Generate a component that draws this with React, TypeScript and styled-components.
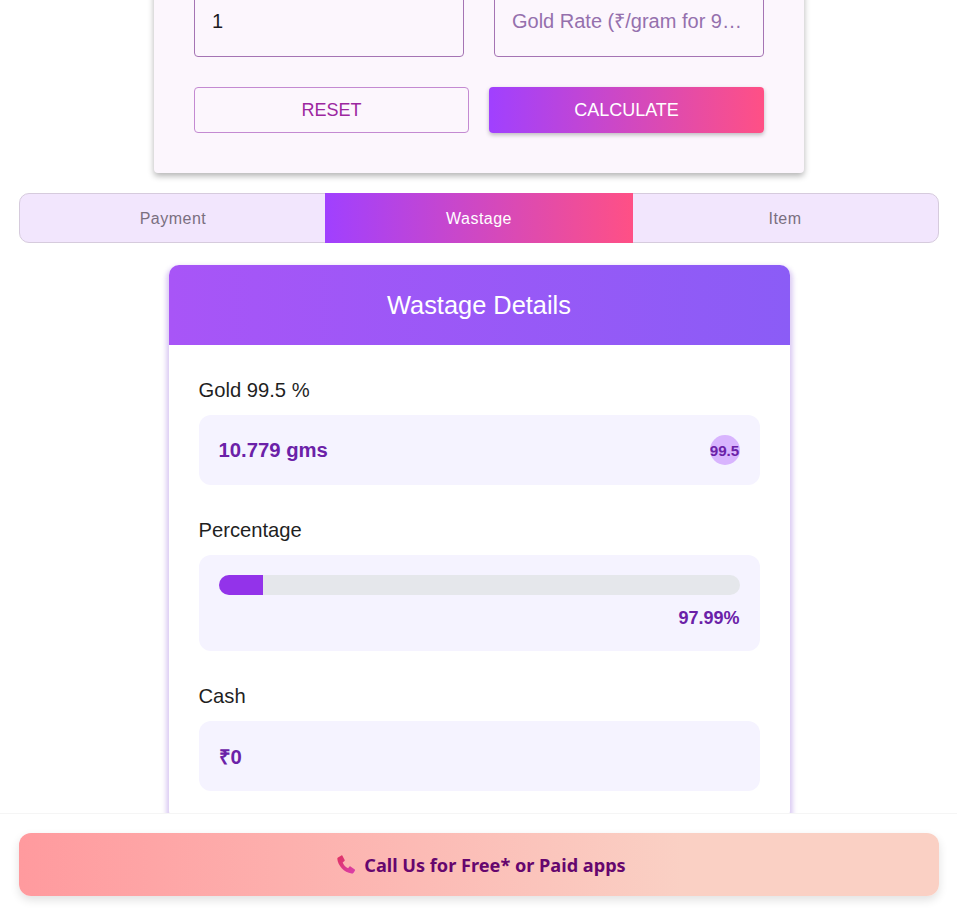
import React from 'react';
import styled, { createGlobalStyle } from 'styled-components';

const brand = 'linear-gradient(90deg, #a040ff, #ff5085)';

const GlobalStyle = createGlobalStyle`
  html, body {
    margin: 0;
    height: 100%;
    overflow: hidden;
    background: #fff;
    font-family: "Liberation Sans", Arial, sans-serif;
  }
  * { box-sizing: border-box; }
`;

const Page = styled.div`
  display: flex;
  flex-direction: column;
  align-items: center;
  margin-top: -55px;
  padding: 0 18px 0 19px;
`;

const FormCard = styled.div`
  width: 650px;
  padding: 40px;
  background: #fcf6fd;
  border-radius: 4px;
  box-shadow: 0 3px 6px rgba(0, 0, 0, 0.3);
  display: flex;
  flex-direction: column;
  gap: 30px;
`;

const InputRow = styled.div`
  display: flex;
  gap: 30px;
`;

const Field = styled.input`
  width: 270px;
  height: 72px;
  padding: 0 17px;
  background: transparent;
  border: 1px solid #a574b4;
  border-radius: 4px;
  font: 20px "Liberation Sans", Arial, sans-serif;
  color: #1c1b1f;
  text-overflow: ellipsis;
  outline: none;

  &::placeholder {
    color: #9570ad;
    opacity: 1;
  }
`;

const ButtonRow = styled.div`
  display: flex;
  gap: 20px;
`;

const ResetButton = styled.button`
  width: 275px;
  height: 46px;
  padding: 0;
  background: transparent;
  border: 1px solid #c48ad2;
  border-radius: 4px;
  font: 18px "Liberation Sans", Arial, sans-serif;
  color: #9c27a0;
`;

const CalcButton = styled.button`
  width: 275px;
  height: 46px;
  padding: 0;
  background: ${brand};
  border: 0;
  border-radius: 4px;
  box-shadow: 0 2px 4px rgba(0, 0, 0, 0.25);
  font: 18px "Liberation Sans", Arial, sans-serif;
  color: #fff;
`;

const Tabs = styled.div`
  align-self: stretch;
  display: grid;
  grid-template-columns: repeat(3, 1fr);
  height: 50px;
  margin-top: 20px;
  background: #f2e6fd;
  border: 1px solid #d6cbdd;
  border-radius: 10px;
`;

const Tab = styled.div<{ $active?: boolean }>`
  display: flex;
  align-items: center;
  justify-content: center;
  padding-top: 1px;
  font-size: 16px;
  letter-spacing: 0.5px;
  color: ${(p) => (p.$active ? '#fff' : '#7a6f80')};
  background: ${(p) => (p.$active ? brand : 'none')};
  margin: ${(p) => (p.$active ? '-1px' : '0')};
`;

const DetailCard = styled.div`
  width: 621px;
  margin-top: 22px;
  margin-bottom: 30px;
  background: #fff;
  border-radius: 10px;
  box-shadow: 0 4px 4px 3px rgba(120, 60, 210, 0.25);
  overflow: hidden;
`;

const DetailHeader = styled.div`
  height: 80px;
  padding-top: 1px;
  display: flex;
  align-items: center;
  justify-content: center;
  background: linear-gradient(90deg, #a855f7, #8b5cf6);
  color: #fff;
  font-size: 25.4px;
`;

const DetailBody = styled.div`
  padding: 30px;
  display: flex;
  flex-direction: column;
  gap: 30px;
`;

const Group = styled.div`
  display: flex;
  flex-direction: column;
  gap: 14px;
`;

const Label = styled.div`
  font-size: 20.2px;
  line-height: 30px;
  height: 26px;
  color: #1f1f1f;
`;

const ValueBox = styled.div`
  height: 70px;
  padding: 0 20px;
  display: flex;
  align-items: center;
  justify-content: space-between;
  background: #f5f3ff;
  border-radius: 12px;
`;

const Value = styled.span`
  font-size: 20.3px;
  font-weight: 700;
  color: #6b21a8;
`;

const Badge = styled.span`
  width: 30px;
  height: 30px;
  display: flex;
  align-items: center;
  justify-content: center;
  border-radius: 50%;
  background: #d8b4fe;
  font-size: 15.2px;
  font-weight: 700;
  color: #6b21a8;
`;

const ProgressBox = styled.div`
  height: 96px;
  padding: 20px;
  background: #f5f3ff;
  border-radius: 12px;
`;

const Track = styled.div`
  height: 20px;
  background: #e5e7eb;
  border-radius: 10px;
  overflow: hidden;
`;

const Fill = styled.div<{ $width: number }>`
  width: ${(p) => p.$width}px;
  height: 100%;
  background: #9333ea;
`;

const Percent = styled.div`
  margin-top: 13px;
  text-align: right;
  font-size: 18px;
  font-weight: 700;
  color: #6b21a8;
`;

const FooterBar = styled.div`
  position: fixed;
  left: 0;
  right: 0;
  bottom: 0;
  height: 107px;
  padding: 19px 18px 24px 19px;
  background: #fff;
  border-top: 1px solid #f5f5f5;
`;

const CallButton = styled.div`
  height: 63px;
  padding-left: 4px;
  display: flex;
  align-items: center;
  justify-content: center;
  gap: 8px;
  background: linear-gradient(90deg, #ff9a9e, #fad0c4 72%);
  border-radius: 12px;
  box-shadow: 0 4px 10px rgba(0, 0, 0, 0.12);
  font-family: "Noto Sans", "Open Sans", sans-serif;
  font-size: 18.15px;
  font-weight: 700;
  color: #66066e;
`;

const PhoneIcon = () => (
  <svg width="20" height="20" viewBox="0 0 20 20">
    <defs>
      <linearGradient id="phone" x1="0" y1="0" x2="1" y2="1">
        <stop offset="0" stopColor="#e0325f" />
        <stop offset="1" stopColor="#d93fae" />
      </linearGradient>
    </defs>
    <path
      fill="url(#phone)"
      d="M2 2.600 5.400.4c.4-.2.8-.1 1 .3l2.300 4.400c.2.4.1.7-.2 1L6.700 7.400c.9 2.600 2.900 4.700 5.400 5.800l1.400-1.600c.3-.3.7-.4 1-.1l4.300 3c.4.3.4.7.2 1.100l-1.200 2c-.5.8-1.300 1.200-2.200 1C8 17.500 1.800 10.500 1.300 3.800c0-.5.2-.9.700-1.200Z"
    />
  </svg>
);

export default function App() {
  return (
    <>
      <GlobalStyle />
      <Page>
        <FormCard>
          <InputRow>
            <Field defaultValue="1" />
            <Field placeholder="Gold Rate (₹/gram for 99.5%)" />
          </InputRow>
          <ButtonRow>
            <ResetButton>RESET</ResetButton>
            <CalcButton>CALCULATE</CalcButton>
          </ButtonRow>
        </FormCard>

        <Tabs>
          <Tab>Payment</Tab>
          <Tab $active>Wastage</Tab>
          <Tab>Item</Tab>
        </Tabs>

        <DetailCard>
          <DetailHeader>Wastage Details</DetailHeader>
          <DetailBody>
            <Group>
              <Label>Gold 99.5 %</Label>
              <ValueBox>
                <Value>10.779 gms</Value>
                <Badge>99.5</Badge>
              </ValueBox>
            </Group>
            <Group>
              <Label>Percentage</Label>
              <ProgressBox>
                <Track>
                  <Fill $width={44} />
                </Track>
                <Percent>97.99%</Percent>
              </ProgressBox>
            </Group>
            <Group>
              <Label>Cash</Label>
              <ValueBox>
                <Value>₹0</Value>
              </ValueBox>
            </Group>
          </DetailBody>
        </DetailCard>
      </Page>

      <FooterBar>
        <CallButton>
          <PhoneIcon />
          Call Us for Free* or Paid apps
        </CallButton>
      </FooterBar>
    </>
  );
}
